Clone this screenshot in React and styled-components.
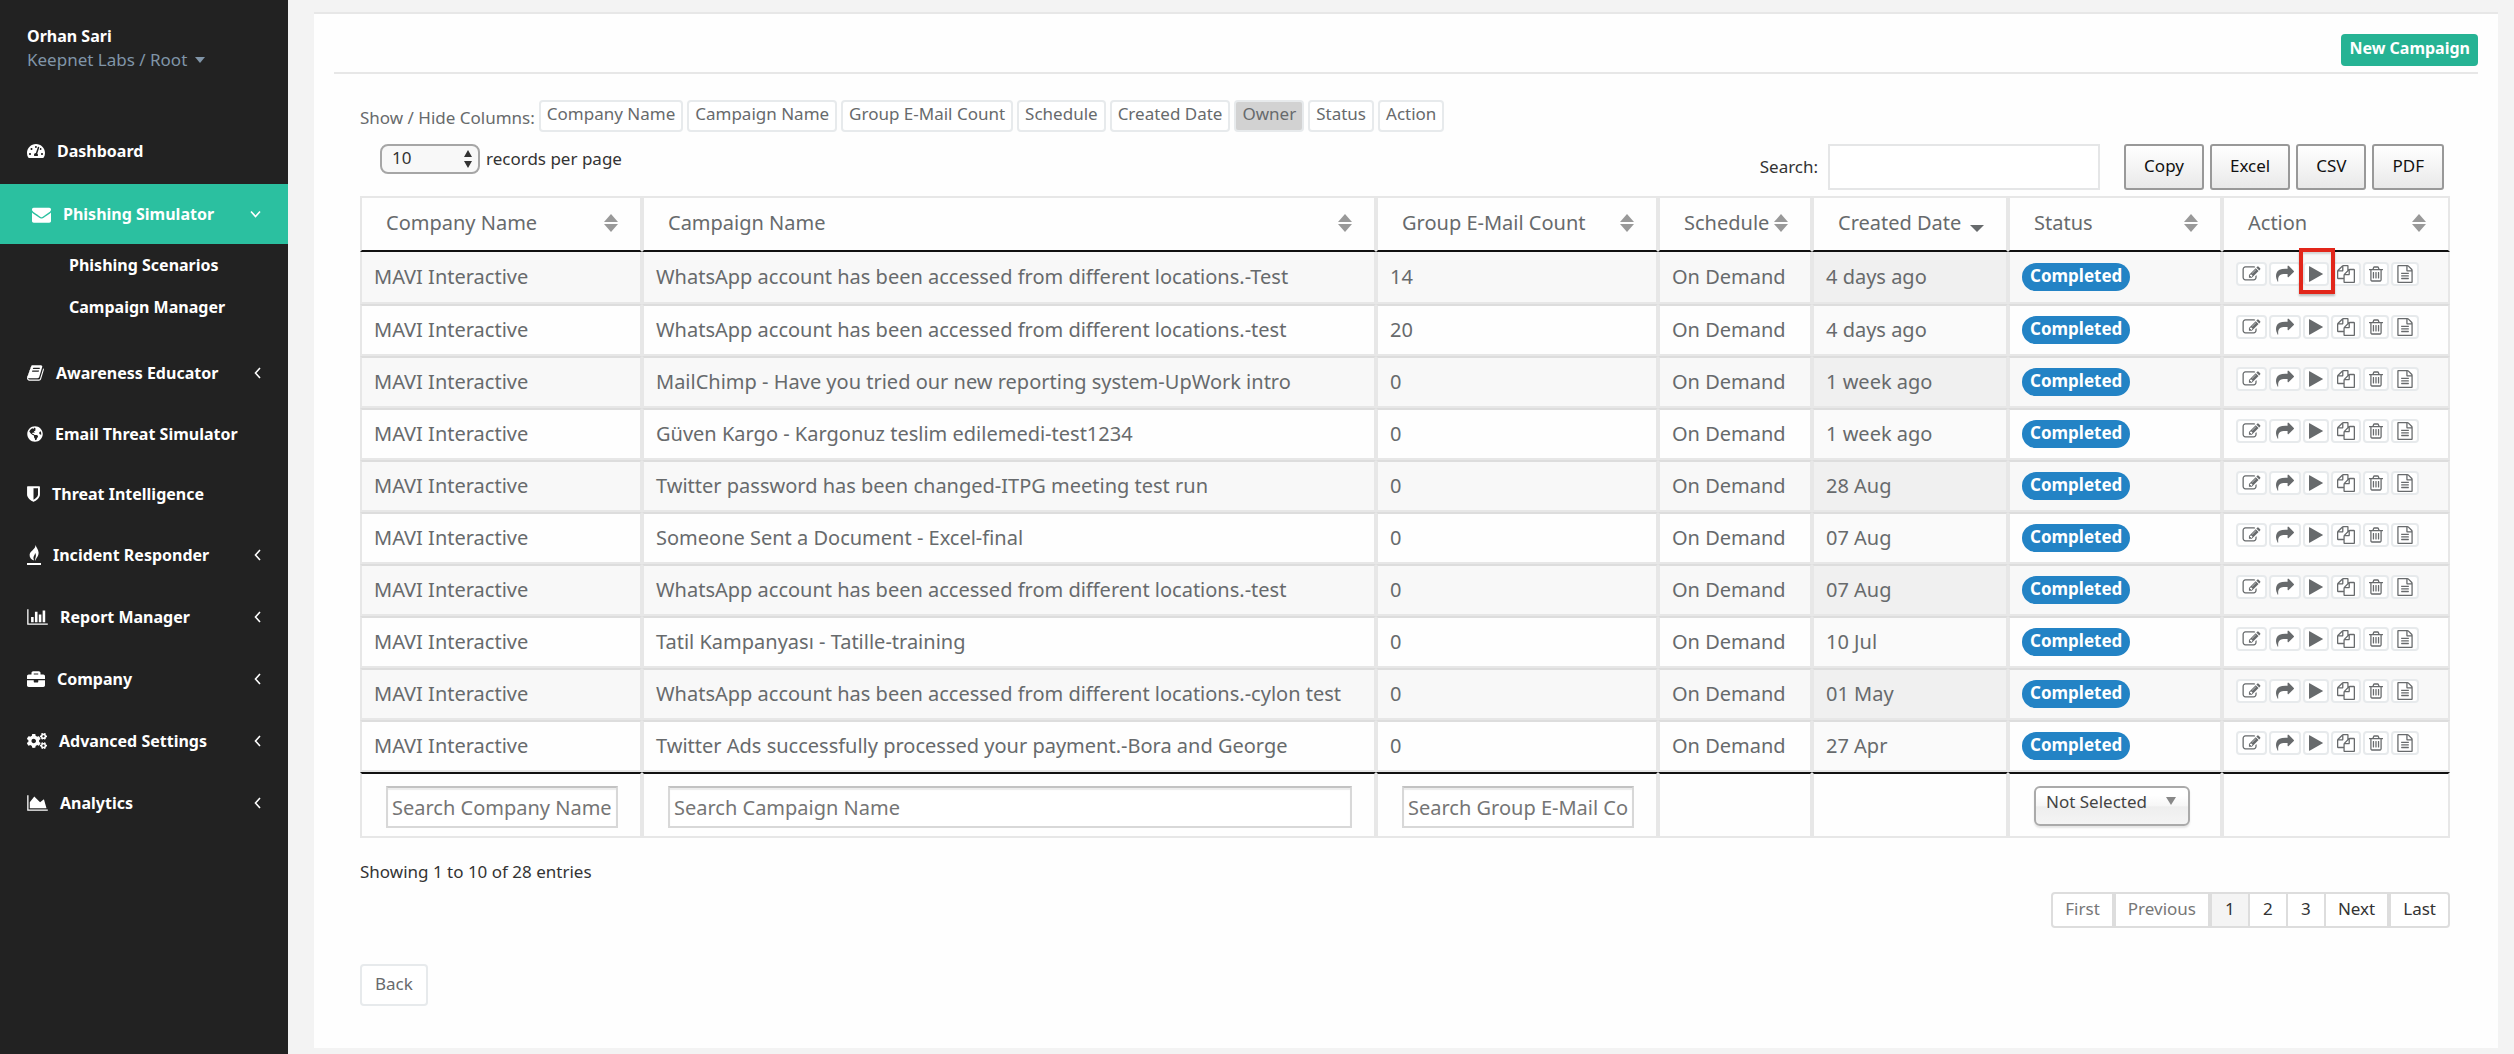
import React from 'react';
import styled, { createGlobalStyle, css } from 'styled-components';
import { FaTachometerAlt, FaGlobeAmericas, FaBriefcase, FaCogs } from 'react-icons/fa';

const GlobalStyle = createGlobalStyle`
  *, *::before, *::after { box-sizing: border-box; }
  body {
    margin: 0;
    background: #f3f3f3;
    color: #676a6c;
    font-family: "Noto Sans", "Open Sans", sans-serif;
    font-size: 17px;
    line-height: 24px;
  }
  button, input, select { font: inherit; color: inherit; margin: 0; }
  a { color: inherit; text-decoration: none; }
`;

/* ---------- icons ---------- */

const ICONS = {
  envelope: { box: '0 0 1792 1792', w: 19, d: 'M1792 710v794q0 66-47 113t-113 47h-1472q-66 0-113-47t-47-113v-794q44 49 101 87 362 246 497 345 57 42 92.5 65.5t94.5 48 110 24.5h2q51 0 110-24.5t94.5-48 92.5-65.5q170-123 498-345 57-39 100-87zm0-294q0 79-49 151t-122 123q-376 261-468 325-10 7-42.5 31t-54 38.5-52 32.5-57.5 27-50 9h-2q-23 0-50-9t-57.5-27-52-32.5-54-38.5-42.5-31q-91-64-262-182.5t-205-142.5q-62-42-117-115.5t-55-136.5q0-78 41.5-130t118.5-52h1472q65 0 112.5 47t47.5 113z' },
  book: { box: '60 0 1680 1792', w: 17, d: 'M1703 478q40 57 18 129l-275 906q-19 64-76.5 107.5t-122.5 43.5h-923q-77 0-148.5-53.5t-99.5-131.5q-24-67-2-127 0-4 3-27t4-37q1-8-3-21.5t-3-19.5q2-11 8-21t16.5-23.5 16.5-23.5q23-38 45-91.5t30-91.5q3-10 .5-30t-.5-28q3-11 17-28t17-23q21-36 42-92t25-90q1-9-2.5-32t.5-28q4-13 22-30.5t22-22.5q19-26 42.5-84.5t27.5-96.5q1-8-3-25.5t-2-26.5q2-8 9-18t18-23 17-21q8-12 16.5-30.5t15-35 16-36 19.5-32 26.5-23.5 36-11.5 47.5 5.5l-1 3q38-9 51-9h761q74 0 114 56t18 130l-274 906q-36 119-71.5 153.5t-128.5 34.5h-869q-27 0-38 15-11 16-1 43 24 70 144 70h923q29 0 56-15.5t35-41.5l300-987q7-22 5-57 38 15 59 43zm-1064 2q-4 13 2 22.5t20 9.5h608q13 0 25.5-9.5t16.5-22.5l21-64q4-13-2-22.5t-20-9.5h-608q-13 0-25.5 9.5t-16.5 22.5zm-83 256q-4 13 2 22.5t20 9.5h608q13 0 25.5-9.5t16.5-22.5l21-64q4-13-2-22.5t-20-9.5h-608q-13 0-25.5 9.5t-16.5 22.5z' },
  shield: { box: '256 0 1280 1792', w: 13, d: 'M1344 960v-640h-448v1137q119-63 213-137 235-184 235-360zm192-768v768q0 86-33.5 170.5t-83 150-118 127.5-126.5 103-121 77.5-89.5 49.5-42.5 20q-12 6-26 6t-26-6q-16-7-42.5-20t-89.5-49.5-121-77.5-126.5-103-118-127.5-83-150-33.5-170.5v-768q0-26 19-45t45-19h1152q26 0 45 19t19 45z' },
  flame: { box: '0 0 14 20', w: 14, d: 'M8.6 0c.5 2.600 2.900 4.400 3 7.600.1 3.600-2.400 5.300-3.300 8.400-.6-2 .6-3.300.6-5.400 0-1-.3-1.900-.8-2.500-.2 2.200-1.700 3-1.700 4.900 0 1 .4 1.700.8 2.600C4.400 14.800 2.400 12.700 2.600 9.800 2.900 5.900 8.400 4.600 8.600 0zM0 18h14v2H0z' },
  bars: { box: '0 0 2048 1792', w: 21, d: 'M640 896v512h-256v-512h256zm384-512v1024h-256v-1024h256zm1024 1152v128h-2048v-1536h128v1408h1920zm-640-896v768h-256v-768h256zm384-384v1152h-256v-1152h256z' },
  area: { box: '0 0 2048 1792', w: 21, d: 'M2048 1536v128h-2048v-1536h128v1408h1920zm-384-1024l256 896h-1664v-576l448-576 576 576z' },
  edit: { box: '-50 0 1892 1792', w: 19, d: 'M888 1184l116-116-152-152-116 116v56h96v96h56zm440-720q-16-16-33 1l-350 350q-17 17-1 33t33-1l350-350q17-17 1-33zm80 594v190q0 119-84.5 203.5t-203.5 84.5h-832q-119 0-203.500-84.500t-84.500-203.500v-832q0-119 84.500-203.500t203.500-84.500h832q63 0 117 25 15 7 18 23 3 17-9 29l-49 49q-14 14-32 8-23-6-45-6h-832q-66 0-113 47t-47 113v832q0 66 47 113t113 47h832q66 0 113-47t47-113v-126q0-13 9-22l64-64q15-15 35-7t20 29zm-96-738l288 288-672 672h-288v-288zm444 132l-92 92-288-288 92-92q28-28 68-28t68 28l152 152q28 28 28 68t-28 68z' },
  share: { box: '-100 0 1992 1792', w: 20, d: 'M1792 640q0 26-19 45l-512 512q-19 19-45 19t-45-19-19-45v-256h-224q-98 0-175.500 6t-154 21.500-133 42.500-105.500 69.500-80 101-48.500 138.500-17.500 181q0 55 5 123 0 6 2.500 23.500t2.500 26.500q0 15-8.500 25t-23.500 10q-16 0-28-17-7-9-13-22t-13.500-30-10.500-24q-127-285-127-451 0-199 53-333 162-403 875-403h224v-256q0-26 19-45t45-19 45 19l512 512q19 19 19 45z' },
  play: { box: '192 0 1408 1792', w: 14, d: 'M1576 927l-1328 738q-23 13-39.500 3t-16.500-36v-1472q0-26 16.500-36t39.500 3l1328 738q23 13 23 31t-23 31z' },
  copy: { box: '0 0 1792 1792', w: 18, d: 'M1696 384q40 0 68 28t28 68v1216q0 40-28 68t-68 28h-960q-40 0-68-28t-28-68v-288h-544q-40 0-68-28t-28-68v-672q0-40 20-88t48-76l408-408q28-28 76-48t88-20h416q40 0 68 28t28 68v328q68-40 128-40h416zm-544 213l-299 299h299v-299zm-640-384l-299 299h299v-299zm196 647l316-316v-416h-384v416q0 40-28 68t-68 28h-416v640h512v-256q0-40 20-88t48-76zm956 804v-1152h-384v416q0 40-28 68t-68 28h-416v640h896z' },
  trash: { box: '192 0 1408 1792', w: 14, d: 'M704 736v576q0 14-9 23t-23 9h-64q-14 0-23-9t-9-23v-576q0-14 9-23t23-9h64q14 0 23 9t9 23zm256 0v576q0 14-9 23t-23 9h-64q-14 0-23-9t-9-23v-576q0-14 9-23t23-9h64q14 0 23 9t9 23zm256 0v576q0 14-9 23t-23 9h-64q-14 0-23-9t-9-23v-576q0-14 9-23t23-9h64q14 0 23 9t9 23zm128 724v-948h-896v948q0 22 7 40.500t14.500 27 10.500 8.500h832q3 0 10.500-8.500t14.500-27 7-40.500zm-672-1076h448l-48-117q-7-9-17-11h-317q-10 2-17 11zm928 32v64q0 14-9 23t-23 9h-96v948q0 83-47 143.500t-113 60.500h-832q-66 0-113-58.500t-47-141.500v-952h-96q-14 0-23-9t-9-23v-64q0-14 9-23t23-9h309l70-167q15-37 54-63t79-26h320q40 0 79 26t54 63l70 167h309q14 0 23 9t9 23z' },
  file: { box: '128 0 1536 1792', w: 16, d: 'M1596 380q28 28 48 76t20 88v1152q0 40-28 68t-68 28h-1344q-40 0-68-28t-28-68v-1600q0-40 28-68t68-28h896q40 0 88 20t76 48zm-444-244v376h376q-10-29-22-41l-313-313q-12-12-41-22zm384 1528v-1024h-416q-40 0-68-28t-28-68v-416h-768v1536h1280zm-1024-864q0-14 9-23t23-9h704q14 0 23 9t9 23v64q0 14-9 23t-23 9h-704q-14 0-23-9t-9-23v-64zm736 224q14 0 23 9t9 23v64q0 14-9 23t-23 9h-704q-14 0-23-9t-9-23v-64q0-14 9-23t23-9h704zm0 256q14 0 23 9t9 23v64q0 14-9 23t-23 9h-704q-14 0-23-9t-9-23v-64q0-14 9-23t23-9h704z' },
};

const Svg = styled.svg`
  display: block;
  flex: none;
  fill: currentColor;
`;

function Glyph({ name, height = 18 }) {
  const icon = ICONS[name];
  return (
    <Svg width={icon.w} height={height} viewBox={icon.box} aria-hidden="true">
      <path d={icon.d} />
    </Svg>
  );
}

/* ---------- shell ---------- */

const Shell = styled.div`
  display: flex;
  align-items: stretch;
  min-height: 100vh;
`;

const Sidebar = styled.nav`
  flex: none;
  width: 288px;
  background: #222;
  color: #fff;
`;

const Profile = styled.div`
  height: 120px;
  padding: 24px 27px 0;
`;

const UserName = styled.div`
  font-size: 16px;
  font-weight: 700;
`;

const AccountLink = styled.a`
  display: inline-flex;
  align-items: center;
  gap: 8px;
  color: #8095a8;
`;

const Menu = styled.ul`
  list-style: none;
  margin: 0;
  padding: 0;
`;

const MenuLink = styled.a`
  display: flex;
  align-items: center;
  gap: 12px;
  height: ${(p) => (p.$plain ? 60 : 62)}px;
  padding: 0 27px;
  font-size: 16px;
  font-weight: 700;
  ${(p) => p.$active && css`
    height: 60px;
    margin-top: 2px;
    padding-left: 32px;
    background: #2bc0a0;
  `}
  & > svg:last-child:not(:first-child) { margin-left: auto; }
`;

const SubMenu = styled.ul`
  list-style: none;
  margin: 0 0 14px;
  padding: 0;
`;

const SubLink = styled.a`
  display: flex;
  align-items: center;
  height: 42px;
  padding-left: 69px;
  font-size: 16px;
  font-weight: 700;
`;

const Main = styled.main`
  flex: 1;
  min-width: 0;
  padding: 12px 16px 6px 26px;
`;

const Panel = styled.section`
  padding: 20px 20px 42px;
  border-top: 2px solid #e7e7e7;
  background: #fefefe;
`;

const PanelHead = styled.header`
  display: flex;
  justify-content: flex-end;
  padding-bottom: 6px;
  border-bottom: 2px solid #e7e7e7;
`;

const NewCampaign = styled.button`
  height: 32px;
  padding: 0 8px 4px;
  border: 0;
  border-radius: 4px;
  background: #26b394;
  color: #fff;
  font-size: 16px;
  font-weight: 700;
`;

const PanelBody = styled.div`
  padding: 26px 28px 0 26px;
`;

/* ---------- toolbars ---------- */

const ColumnBar = styled.div`
  display: flex;
  gap: 4px;
  height: 44px;
`;

const ColumnLabel = styled.span`
  padding-top: 6px;
`;

const Pill = styled.button`
  height: 32px;
  padding: 0 6px 4px;
  border: 2px solid #e7eaec;
  border-radius: 4px;
  background: ${(p) => (p.$off ? '#d2d2d2' : '#fff')};
  line-height: 20px;
  white-space: nowrap;
`;

const TableBar = styled.div`
  display: flex;
  align-items: flex-start;
  justify-content: space-between;
  height: 52px;
  padding: 0 6px 0 20px;
  color: #333;
`;

const LengthLabel = styled.label`
  display: flex;
  align-items: center;
  gap: 6px;
`;

const SelectWrap = styled.span`
  position: relative;
  display: inline-flex;
  & > svg {
    position: absolute;
    pointer-events: none;
    right: ${(p) => p.$right}px;
    top: ${(p) => p.$top}px;
  }
`;

const LengthSelect = styled.select`
  appearance: none;
  width: 100px;
  height: 30px;
  padding: 0 10px 2px;
  border: 2px solid #a6a6a6;
  border-radius: 8px;
  background: #f8f8f8;
`;

const StatusSelect = styled.select`
  appearance: none;
  display: block;
  width: 156px;
  height: 40px;
  padding: 0 10px 8px;
  border: 2px solid #aaa;
  border-radius: 6px;
  background: linear-gradient(#fff 20%, #f6f6f6 50%, #eee 52%, #f4f4f4 100%);
  box-shadow: 0 2px 2px rgba(0, 0, 0, 0.1);
  color: #444;
  font-size: 17px;
`;

const Tools = styled.div`
  display: flex;
  gap: 6px;
`;

const SearchLabel = styled.label`
  display: flex;
  align-items: center;
  gap: 10px;
  margin-right: 18px;
  line-height: 20px;
`;

const SearchInput = styled.input`
  width: 272px;
  height: 46px;
  padding: 0 10px;
  border: 2px solid #e5e6e7;
  background: #fff;
`;

const ExportButton = styled.button`
  height: 46px;
  padding: 0 18px 2px;
  border: 2px solid #999;
  border-radius: 3px;
  background: linear-gradient(#fff, #e9e9e9);
  color: #111;
`;

/* ---------- table ---------- */

const Table = styled.table`
  width: 100%;
  table-layout: fixed;
  border-collapse: separate;
  border-spacing: 0;
  font-size: 20px;
  line-height: 26px;
`;

const Col = styled.col`
  width: ${(p) => p.$w};
`;

const HeadCell = styled.th`
  height: 56px;
  padding: 0 22px 2px 24px;
  border: 2px solid #e7e7e7;
  border-bottom-color: #111;
  font-weight: 400;
  text-align: left;
`;

const HeadButton = styled.button`
  display: flex;
  align-items: center;
  justify-content: space-between;
  width: 100%;
  padding: 0;
  border: 0;
  background: none;
  white-space: nowrap;
`;

const Cell = styled.td`
  height: 52px;
  padding: 0 12px;
  border: 2px solid #e7e7e7;
  border-top-color: #ddd;
  background: ${(p) => (p.$sorted ? '#fafafa' : '#fefefe')};
  white-space: nowrap;
`;

const Row = styled.tr`
  &:first-child ${Cell} { border-top: 0; }
  &:nth-child(odd) ${Cell} { background: #f8f8f8; }
  &:nth-child(odd) ${Cell}:nth-child(5) { background: #f0f0f0; }
`;

const FootCell = styled.td`
  height: 66px;
  padding: 12px 22px 8px 24px;
  border: 2px solid #e7e7e7;
  border-top-color: #111;
  vertical-align: top;
`;

const FilterInput = styled.input`
  display: block;
  width: 100%;
  height: 42px;
  padding: 0 4px;
  border: 2px solid #d8d8d8;
  border-top-color: #c2c2c2;
  background: #fff;
  box-shadow: inset 0 2px 1px #ececec;
  &::placeholder { color: #757575; opacity: 1; }
`;

const Badge = styled.span`
  display: block;
  width: fit-content;
  padding: 0 8px 2px;
  border-radius: 14px;
  background: #2383c5;
  color: #fff;
  font-size: 17px;
  font-weight: 700;
`;

const Actions = styled.div`
  display: flex;
  gap: 2px;
  margin-bottom: 6px;
`;

const ActionSlot = styled.span`
  position: relative;
  display: flex;
`;

const ActionButton = styled.button`
  display: flex;
  align-items: center;
  height: 24px;
  padding: 0 4px;
  border: 2px solid #e7eaec;
  border-radius: 4px;
  background: #fff;
`;

const Marker = styled.span`
  position: absolute;
  z-index: 1;
  top: -14px;
  right: -6px;
  bottom: -8px;
  left: -4px;
  border: 4px solid #e2261a;
  box-shadow: 0 2px 2px rgba(0, 0, 0, 0.25), inset 0 2px 2px rgba(0, 0, 0, 0.15);
  pointer-events: none;
`;

/* ---------- below the table ---------- */

const Info = styled.p`
  margin: 22px 0 8px;
  color: #333;
`;

const Pagination = styled.nav`
  display: flex;
  justify-content: flex-end;
  margin-bottom: 36px;
`;

const PageButton = styled.button`
  height: 36px;
  min-width: 40px;
  padding: 0 12px 2px;
  margin-left: ${(p) => (p.$joined ? -2 : 0)}px;
  border: 2px solid #ddd;
  background: ${(p) => (p.$current ? '#f4f4f4' : '#fff')};
  color: ${(p) => (p.disabled ? '#777' : '#333')};
  line-height: 20px;
  &:first-child { border-radius: 4px 0 0 4px; }
  &:last-child { border-radius: 0 4px 4px 0; }
`;

const BackButton = styled.button`
  height: 42px;
  padding: 0 13px 2px;
  border: 2px solid #e7eaec;
  border-radius: 4px;
  background: #fff;
`;

/* ---------- data ---------- */

const MENU = [
  { label: 'Dashboard', icon: <FaTachometerAlt size={18} /> },
  { label: 'Phishing Simulator', icon: <Glyph name="envelope" height={19} />, children: ['Phishing Scenarios', 'Campaign Manager'] },
  { label: 'Awareness Educator', icon: <Glyph name="book" height={20} />, more: true },
  { label: 'Email Threat Simulator', icon: <FaGlobeAmericas size={16} />, plain: true },
  { label: 'Threat Intelligence', icon: <Glyph name="shield" />, plain: true },
  { label: 'Incident Responder', icon: <Glyph name="flame" height={20} />, more: true },
  { label: 'Report Manager', icon: <Glyph name="bars" />, more: true },
  { label: 'Company', icon: <FaBriefcase size={18} />, more: true },
  { label: 'Advanced Settings', icon: <FaCogs size={20} />, more: true },
  { label: 'Analytics', icon: <Glyph name="area" />, more: true },
];

const TOGGLES = ['Company Name', 'Campaign Name', 'Group E-Mail Count', 'Schedule', 'Created Date', 'Owner', 'Status', 'Action'];

const COLUMNS = [
  { label: 'Company Name', width: '282px', filter: true },
  { label: 'Campaign Name', width: 'auto', filter: true },
  { label: 'Group E-Mail Count', width: '282px', filter: true },
  { label: 'Schedule', width: '154px' },
  { label: 'Created Date', width: '196px', sorted: true },
  { label: 'Status', width: '214px', select: true },
  { label: 'Action', width: '228px' },
];

const ROWS = [
  ['WhatsApp account has been accessed from different locations.-Test', 14, '4 days ago'],
  ['WhatsApp account has been accessed from different locations.-test', 20, '4 days ago'],
  ['MailChimp - Have you tried our new reporting system-UpWork intro', 0, '1 week ago'],
  ['Güven Kargo - Kargonuz teslim edilemedi-test1234', 0, '1 week ago'],
  ['Twitter password has been changed-ITPG meeting test run', 0, '28 Aug'],
  ['Someone Sent a Document - Excel-final', 0, '07 Aug'],
  ['WhatsApp account has been accessed from different locations.-test', 0, '07 Aug'],
  ['Tatil Kampanyası - Tatille-training', 0, '10 Jul'],
  ['WhatsApp account has been accessed from different locations.-cylon test', 0, '01 May'],
  ['Twitter Ads successfully processed your payment.-Bora and George', 0, '27 Apr'],
];

const ACTIONS = [
  ['edit', 'Edit'],
  ['share', 'Share'],
  ['play', 'Start'],
  ['copy', 'Duplicate'],
  ['trash', 'Delete'],
  ['file', 'Report'],
];

function Chevron({ down }) {
  return (
    <Svg width={down ? 11 : 7} height={down ? 8 : 12} viewBox={down ? '0 0 11 8' : '0 0 7 12'} aria-hidden="true">
      <path d={down ? 'M1 1.500l4.500 5 4.500-5' : 'M6 1L1.500 6 6 11'} fill="none" stroke="#fff" strokeWidth="1.600" />
    </Svg>
  );
}

function SortIcon({ sorted }) {
  return (
    <Svg width="14" height="18" viewBox="0 0 14 18" aria-hidden="true">
      {!sorted && <path d="M0 8L7 0l7 8z" fill="#999" />}
      {sorted ? <path d="M0 11h14l-7 7z" fill="#676a6c" /> : <path d="M0 10h14l-7 8z" fill="#999" />}
    </Svg>
  );
}

function SideMenu() {
  return (
    <Sidebar>
      <Profile>
        <UserName>Orhan Sari</UserName>
        <AccountLink href="#account">
          Keepnet Labs / Root
          <Svg width="10" height="6" viewBox="0 0 10 6" aria-hidden="true"><path d="M0 0h10L5 6z" /></Svg>
        </AccountLink>
      </Profile>
      <Menu>
        {MENU.map((item) => (
          <li key={item.label}>
            <MenuLink href="#menu" $active={!!item.children} $plain={item.plain}>
              {item.icon}
              {item.label}
              {(item.more || item.children) && <Chevron down={!!item.children} />}
            </MenuLink>
            {item.children && (
              <SubMenu>
                {item.children.map((c) => (
                  <li key={c}><SubLink href="#submenu">{c}</SubLink></li>
                ))}
              </SubMenu>
            )}
          </li>
        ))}
      </Menu>
    </Sidebar>
  );
}

function CampaignTable() {
  return (
    <Table>
      <colgroup>
        {COLUMNS.map((c) => <Col key={c.label} $w={c.width} />)}
      </colgroup>
      <thead>
        <tr>
          {COLUMNS.map((c) => (
            <HeadCell key={c.label} scope="col">
              <HeadButton type="button">{c.label}<SortIcon sorted={c.sorted} /></HeadButton>
            </HeadCell>
          ))}
        </tr>
      </thead>
      <tbody>
        {ROWS.map(([name, count, date], i) => (
          <Row key={i}>
            <Cell>MAVI Interactive</Cell>
            <Cell>{name}</Cell>
            <Cell>{count}</Cell>
            <Cell>On Demand</Cell>
            <Cell $sorted>{date}</Cell>
            <Cell><Badge>Completed</Badge></Cell>
            <Cell>
              <Actions>
                {ACTIONS.map(([icon, title]) => (
                  <ActionSlot key={icon}>
                    <ActionButton type="button" aria-label={title}><Glyph name={icon} /></ActionButton>
                    {i === 0 && icon === 'play' && <Marker />}
                  </ActionSlot>
                ))}
              </Actions>
            </Cell>
          </Row>
        ))}
      </tbody>
      <tfoot>
        <tr>
          {COLUMNS.map((c) => (
            <FootCell key={c.label}>
              {c.filter && <FilterInput type="text" aria-label={`Search ${c.label}`} placeholder={`Search ${c.label}`} />}
              {c.select && (
                <SelectWrap $right={14} $top={11}>
                  <StatusSelect aria-label="Status"><option>Not Selected</option></StatusSelect>
                  <Svg width="10" height="8" viewBox="0 0 10 8" aria-hidden="true"><path d="M0 0h10L5 8z" fill="#888" /></Svg>
                </SelectWrap>
              )}
            </FootCell>
          ))}
        </tr>
      </tfoot>
    </Table>
  );
}

export default function App() {
  return (
    <>
      <GlobalStyle />
      <Shell>
        <SideMenu />
        <Main>
          <Panel>
            <PanelHead><NewCampaign type="button">New Campaign</NewCampaign></PanelHead>
            <PanelBody>
              <ColumnBar>
                <ColumnLabel>Show / Hide Columns:</ColumnLabel>
                {TOGGLES.map((t) => <Pill key={t} type="button" $off={t === 'Owner'}>{t}</Pill>)}
              </ColumnBar>
              <TableBar>
                <LengthLabel>
                  <SelectWrap $right={8} $top={6}>
                    <LengthSelect><option>10</option></LengthSelect>
                    <Svg width="8" height="18" viewBox="0 0 8 18" aria-hidden="true"><path d="M0 7l4-7 4 7zM0 11h8l-4 7z" fill="#333" /></Svg>
                  </SelectWrap>
                  records per page
                </LengthLabel>
                <Tools>
                  <SearchLabel>Search:<SearchInput type="search" /></SearchLabel>
                  {['Copy', 'Excel', 'CSV', 'PDF'].map((b) => <ExportButton key={b} type="button">{b}</ExportButton>)}
                </Tools>
              </TableBar>
              <CampaignTable />
              <Info>Showing 1 to 10 of 28 entries</Info>
              <Pagination aria-label="Pages">
                <PageButton type="button" disabled>First</PageButton>
                <PageButton type="button" disabled>Previous</PageButton>
                <PageButton type="button" $current>1</PageButton>
                <PageButton type="button" $joined>2</PageButton>
                <PageButton type="button" $joined>3</PageButton>
                <PageButton type="button" $joined>Next</PageButton>
                <PageButton type="button">Last</PageButton>
              </Pagination>
              <BackButton type="button">Back</BackButton>
            </PanelBody>
          </Panel>
        </Main>
      </Shell>
    </>
  );
}
